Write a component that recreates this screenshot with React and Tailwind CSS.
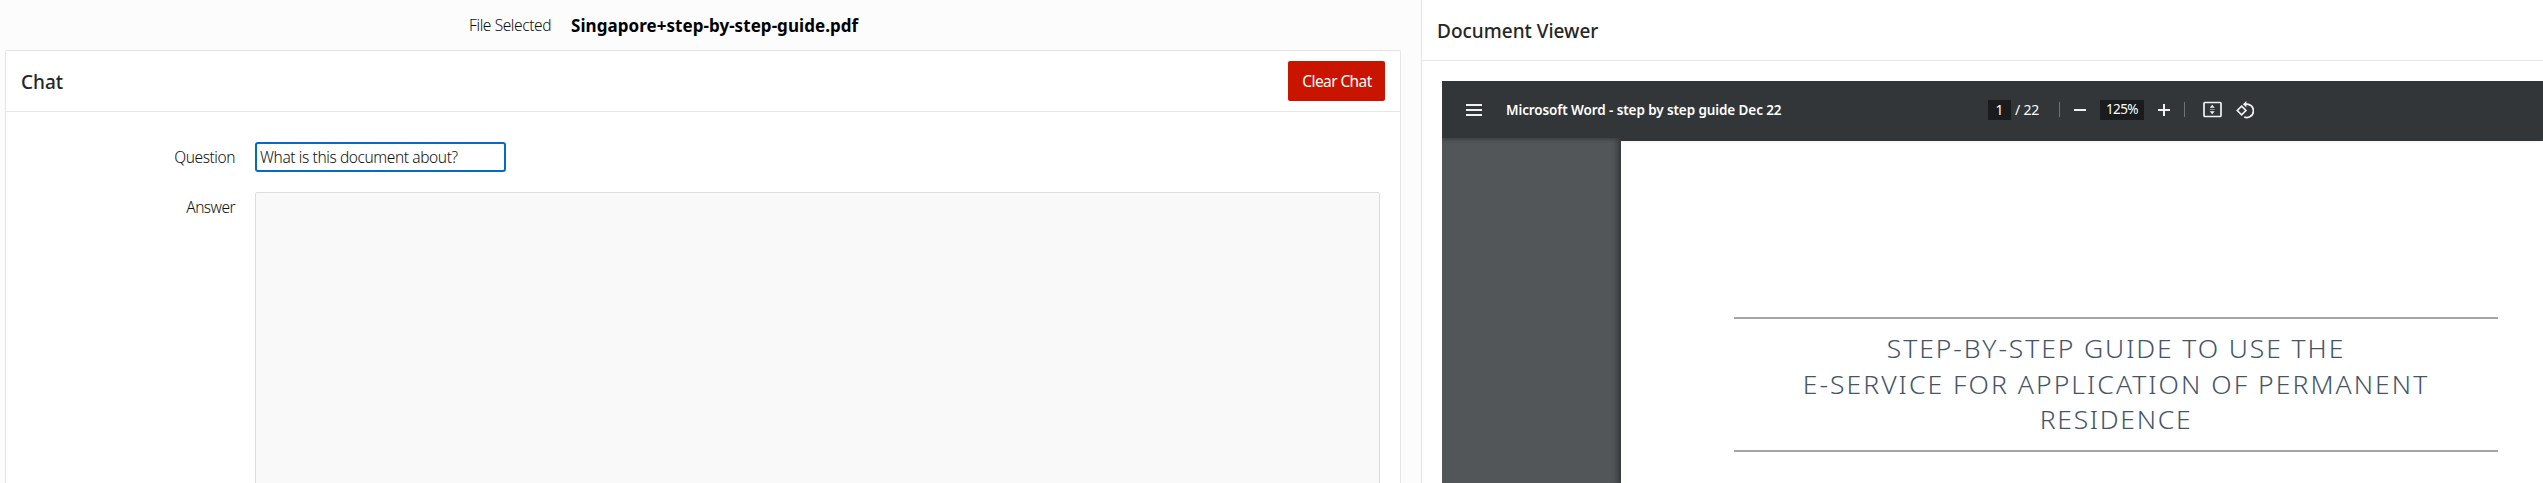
function Separator() {
  return <div className="h-[15px] w-px bg-[#707376]" />;
}

function FitIcon() {
  return (
    <svg width="19" height="17" viewBox="0 0 19 17" fill="none">
      <rect x="1" y="1.5" width="17" height="14" rx="1" stroke="#f1f1f1" strokeWidth="1.7" />
      <path d="M6.7 6.8h5L9.2 3.7zM6.7 10.2h5L9.2 13.3z" fill="#f1f1f1" />
      <path d="M6.8 8.5h4.8" stroke="#8a8c8e" strokeWidth="1" />
    </svg>
  );
}

function RotateIcon() {
  return (
    <svg width="18" height="18" viewBox="0 0 18 18" fill="none" stroke="#f1f1f1">
      <path d="M5.6 5.2L9.9 9.5 5.6 13.8 1.3 9.5z" strokeWidth="1.7" />
      <path d="M9.6 3.2A6.7 6.7 0 1 1 8.2 16" strokeWidth="1.8" />
      <path d="M10.4 0v6.4L6.9 3.2z" fill="#f1f1f1" stroke="none" />
    </svg>
  );
}

function ChatPanel() {
  return (
    <section className="ml-[5px] h-[433px] w-[1396px] overflow-hidden rounded-t-[2px] border border-b-0 border-[#e4e4e4] bg-white">
      <header className="flex h-[61px] items-start justify-between border-b border-[#e8e8e8] pl-[15px] pr-[15px]">
        <h2 className="pt-[16px] text-[19px] leading-[30px] font-medium text-[#262626]">Chat</h2>
        <button className="mt-[10px] h-[40px] w-[97px] rounded-[2px] bg-[#c91400] pl-px text-[15.5px] leading-[40px] tracking-[-0.6px] whitespace-nowrap text-white">
          Clear Chat
        </button>
      </header>
      <div className="flex h-[60px] pt-[30px]">
        <label className="w-[229px] pt-[1px] text-right text-[15.5px] leading-[28px] font-light tracking-[-0.45px] text-[#111]">
          Question
        </label>
        <div className="ml-[20px] h-[30px] w-[251px] rounded-[3px] border-2 border-[#0769c7] bg-white pl-[3px] text-[15.5px] leading-[27px] font-light tracking-[-0.4px] whitespace-nowrap text-[#111]">
          What is this document about?
        </div>
      </div>
      <div className="flex pt-[20px]">
        <label className="w-[229px] pt-[1px] text-right text-[15.5px] leading-[28px] font-light tracking-[-0.55px] text-[#111]">
          Answer
        </label>
        <div className="ml-[20px] h-[301px] w-[1125px] rounded-[2px] border border-[#dcdcdc] bg-[#f9f9f9]" />
      </div>
    </section>
  );
}

function Toolbar() {
  return (
    <div className="relative z-10 flex h-[57px] items-center bg-[#323639] text-white shadow-[0_1px_4px_rgba(0,0,0,0.35)]">
      <div className="ml-[24px] flex w-[16px] flex-col gap-[3px]">
        <i className="h-[2px] bg-[#f1f1f1]" />
        <i className="h-[2px] bg-[#f1f1f1]" />
        <i className="h-[2px] bg-[#f1f1f1]" />
      </div>
      <div className="ml-[24px] w-[481px] text-[13.5px] leading-[20px] font-semibold tracking-[-0.1px] whitespace-nowrap">
        Microsoft Word - step by step guide Dec 22
      </div>
      <div className="ml-[1px] h-[20px] w-[23px] bg-[#191b1c] text-center text-[14px] leading-[19px]">1</div>
      <div className="ml-[4px] w-[44px] text-[14px] leading-[19px] tracking-[-0.2px] whitespace-nowrap">/ 22</div>
      <Separator />
      <div className="ml-[14px] h-[2px] w-[12px] bg-[#f1f1f1]" />
      <div className="ml-[14px] h-[20px] w-[44px] bg-[#191b1c] text-center text-[13.5px] leading-[19px] tracking-[-0.6px]">125%</div>
      <svg className="ml-[14px]" width="12" height="12" viewBox="0 0 12 12">
        <path d="M0 6h12M6 0v12" stroke="#f1f1f1" strokeWidth="2" />
      </svg>
      <div className="ml-[14px]">
        <Separator />
      </div>
      <div className="ml-[18px]">
        <FitIcon />
      </div>
      <div className="ml-[14px]">
        <RotateIcon />
      </div>
    </div>
  );
}

function DocumentPage() {
  return (
    <div className="mt-[3px] ml-[179px] h-[342px] grow bg-white pt-[176px] shadow-[0_0_6px_3px_rgba(0,0,0,0.4)]">
      <h1 className="ml-[113px] h-[135px] w-[764px] border-y-2 border-[#a5a5a5] pt-[12px] text-center text-[26.5px] leading-[35.5px] font-light whitespace-nowrap text-[#44546a]">
        <span className="block tracking-[1.9px]">STEP-BY-STEP GUIDE TO USE THE</span>
        <span className="block tracking-[2.05px]">E-SERVICE FOR APPLICATION OF PERMANENT</span>
        <span className="block tracking-[1.7px]">RESIDENCE</span>
      </h1>
    </div>
  );
}

export default function App() {
  return (
    <main className="flex h-[483px] w-[2543px] overflow-hidden bg-[#fcfcfc] font-['Noto_Sans','Open_Sans',sans-serif]">
      <div className="w-[1421px]">
        <div className="flex h-[50px] pl-[469px]">
          <span className="w-[102px] pt-[11px] text-[15.5px] leading-[28px] font-light tracking-[-0.4px] whitespace-nowrap text-[#111]">
            File Selected
          </span>
          <span className="pt-[11px] text-[17px] leading-[29px] font-bold tracking-[0.05px] whitespace-nowrap text-black">
            Singapore+step-by-step-guide.pdf
          </span>
        </div>
        <ChatPanel />
      </div>
      <section className="h-[483px] w-[1122px] border-l border-[#e4e4e4] bg-white">
        <h2 className="h-[61px] border-b border-[#e8e8e8] pt-[16px] pl-[15px] text-[19px] leading-[30px] font-medium text-[#262626]">
          Document Viewer
        </h2>
        <div className="mt-[20px] ml-[20px] h-[402px] overflow-hidden bg-[#525659]">
          <Toolbar />
          <DocumentPage />
        </div>
      </section>
    </main>
  );
}
